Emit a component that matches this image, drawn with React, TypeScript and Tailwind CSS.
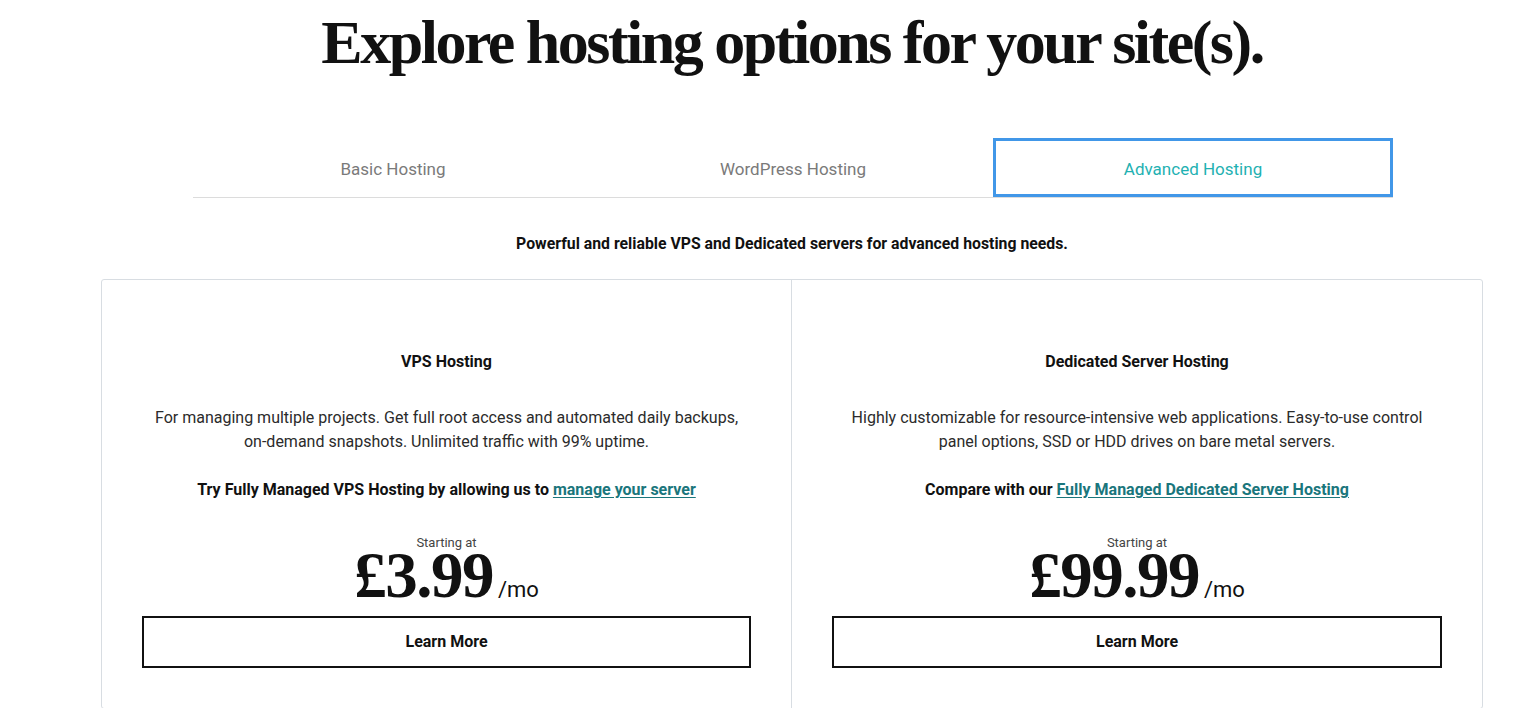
import { useState } from "react";

type Plan = {
  title: string;
  lines: string[];
  cta: string;
  link: string;
  price: string;
};

const plans: Plan[] = [
  {
    title: "VPS Hosting",
    lines: [
      "For managing multiple projects. Get full root access and automated daily backups,",
      "on-demand snapshots. Unlimited traffic with 99% uptime.",
    ],
    cta: "Try Fully Managed VPS Hosting by allowing us to",
    link: "manage your server",
    price: "£3.99",
  },
  {
    title: "Dedicated Server Hosting",
    lines: [
      "Highly customizable for resource-intensive web applications. Easy-to-use control",
      "panel options, SSD or HDD drives on bare metal servers.",
    ],
    cta: "Compare with our",
    link: "Fully Managed Dedicated Server Hosting",
    price: "£99.99",
  },
];

const tabs = ["Basic Hosting", "WordPress Hosting", "Advanced Hosting"];

const serif = "font-['Liberation_Serif',serif]";
const sans = "font-['Roboto',sans-serif]";

function PlanColumn({ plan, first }: { plan: Plan; first?: boolean }) {
  return (
    <div
      className={`flex flex-col items-center px-10 pt-[72px] pb-10 ${first ? "border-r border-[#d8dde2]" : ""}`}
    >
      <h3 className="text-[16px] font-bold text-[#111] leading-5">{plan.title}</h3>
      <p className="mt-[34px] text-center text-[16px] leading-6 text-[#2b2b2b]">
        {plan.lines[0]}
        <br />
        {plan.lines[1]}
      </p>
      <p className="mt-[26px] text-[16px] font-bold leading-5 text-[#111]">
        {plan.cta}{" "}
        <a href="#" className="text-[#1a767c] underline underline-offset-2">
          {plan.link}
        </a>
      </p>
      <div className="mt-[35px] text-[13px] leading-4 text-[#444]">Starting at</div>
      <div className="flex items-baseline">
        <span className={`${serif} text-[65px] font-bold leading-[48px] tracking-[-1.5px] text-[#111]`}>
          {plan.price}
        </span>
        <span className="ml-[5px] text-[22px] leading-none text-[#111]">/mo</span>
      </div>
      <button className="mt-[15px] h-[52px] w-full border-2 border-[#111] text-[16px] font-bold text-[#111]">
        Learn More
      </button>
    </div>
  );
}

export default function App() {
  const [active, setActive] = useState(2);

  return (
    <div className={`${sans} min-h-screen bg-white`}>
      <div className="ml-[101px] flex w-[1382px] flex-col items-center">
        <h1
          className={`${serif} mt-[6px] text-[62px] font-bold leading-[72px] tracking-[-2.5px] text-[#111]`}
        >
          Explore hosting options for your site(s).
        </h1>

        <div className="mt-[60px] ml-[2px] grid w-[1200px] grid-cols-3 border-b border-[#dcdcdc]">
          {tabs.map((t, i) => (
            <button
              key={t}
              onClick={() => setActive(i)}
              className={`h-[59px] pt-1 text-[17px] ${
                i === active
                  ? "border-[3px] border-[#4197e8] text-[#1fb1b2]"
                  : "text-[#7a7a7a]"
              }`}
            >
              {t}
            </button>
          ))}
        </div>

        <p className="mt-[36px] text-[15.8px] font-bold leading-5 text-[#111]">
          Powerful and reliable VPS and Dedicated servers for advanced hosting needs.
        </p>

        <div className="mt-[25px] grid w-full grid-cols-2 rounded-[3px] border border-[#d8dde2]">
          {plans.map((p, i) => (
            <PlanColumn key={p.title} plan={p} first={i === 0} />
          ))}
        </div>
      </div>
    </div>
  );
}
